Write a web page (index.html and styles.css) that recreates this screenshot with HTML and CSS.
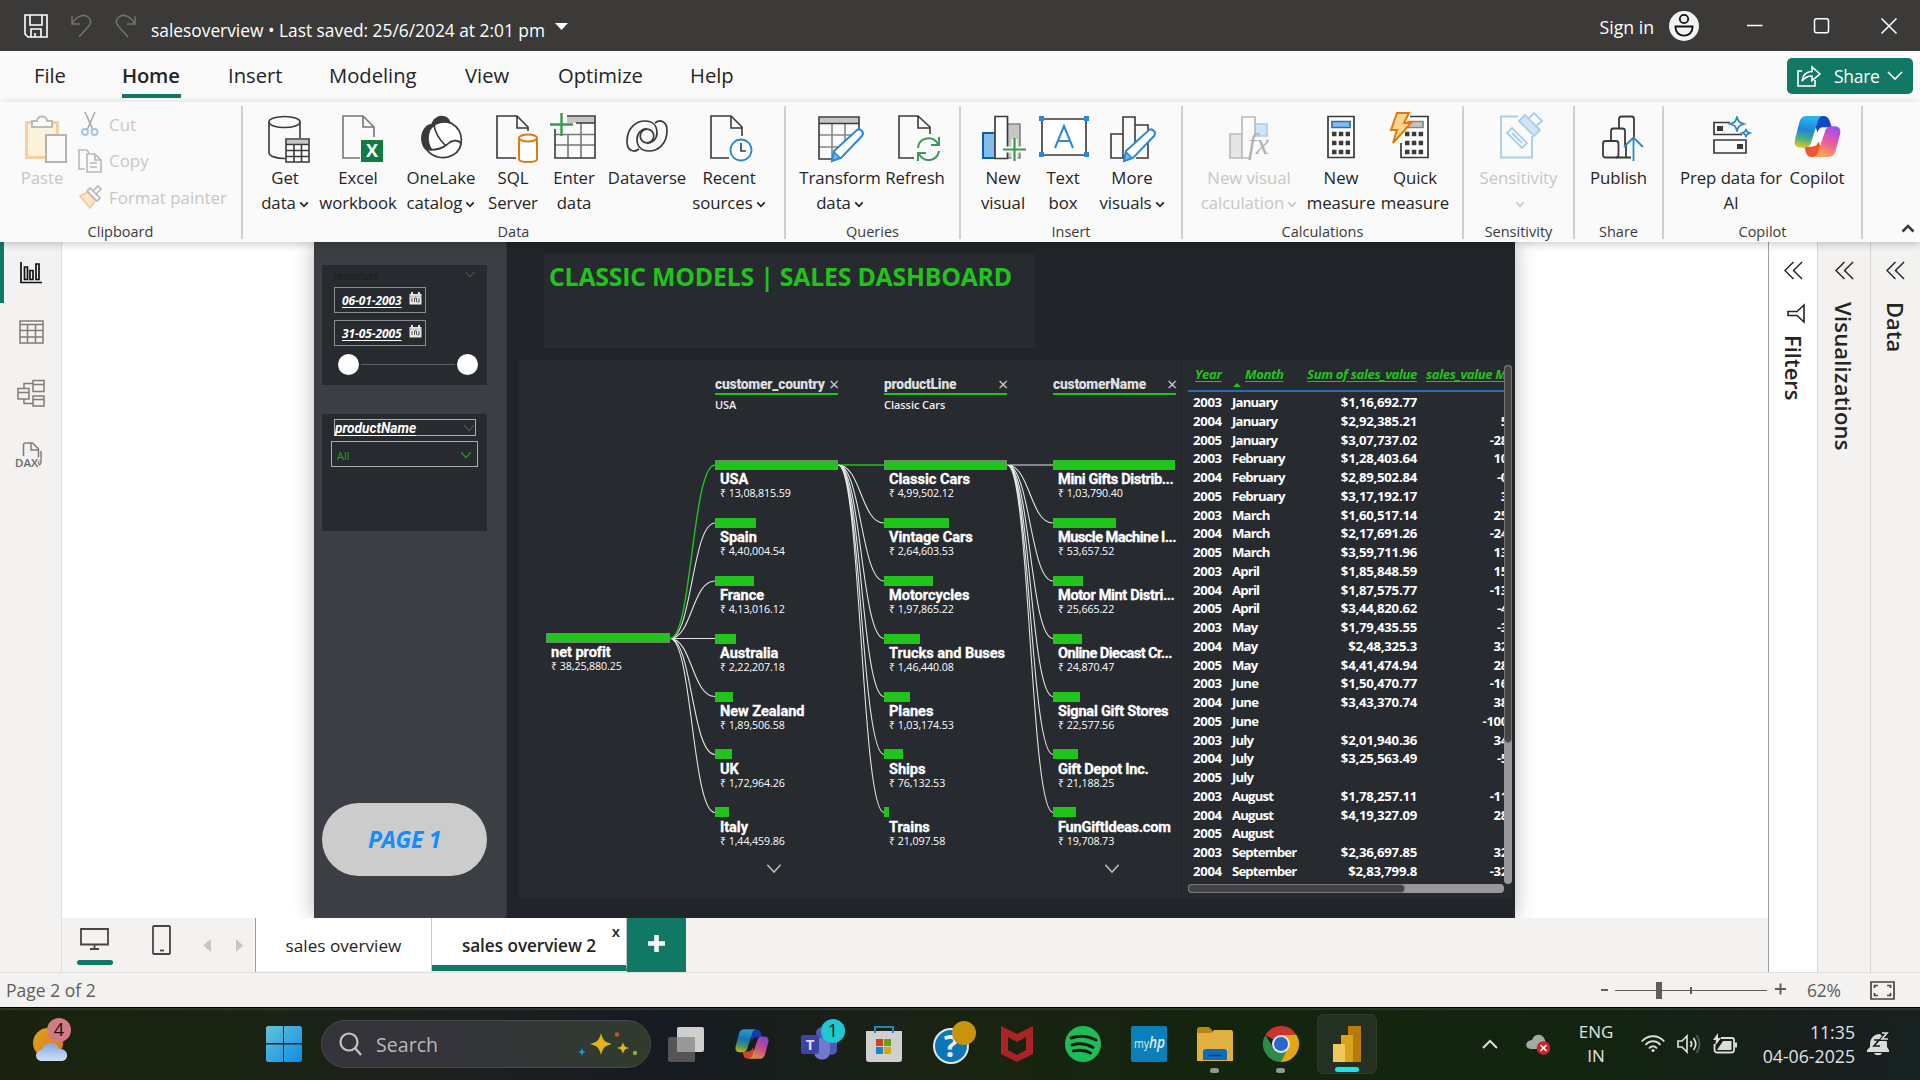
FILE: index.html
```html
<!DOCTYPE html>
<html lang="en">
<head>
<meta charset="utf-8">
<title>salesoverview</title>
<link rel="stylesheet" href="styles.css">
</head>
<body>
<svg class="defs" width="0" height="0">
  <defs>
    <symbol id="chev" viewBox="0 0 10 7"><path d="M1.3 1.3 5 5.3 8.7 1.3" fill="none" stroke="currentColor" stroke-width="1.700"/></symbol>
    <symbol id="dbl" viewBox="0 0 20 20"><path d="M10 1 1 10l9 9M19 1l-9 9 9 9" fill="none" stroke="#252423" stroke-width="1.5"/></symbol>
    <symbol id="thin" viewBox="0 0 12 8"><path d="M1 1.2 6 6.6 11 1.2" fill="none" stroke="currentColor" stroke-width="1.2"/></symbol>
    <symbol id="cal" viewBox="0 0 13 13"><path d="M.5 2h12v10.500H.5z" fill="#e8e8e8"/><path d="M3 0v3M10 0v3" stroke="#e8e8e8" stroke-width="2"/><path d="M1 4.200h11" stroke="#888" stroke-dasharray="1.500 1"/><path d="M3 6v4M5.500 6v4M5.500 6h2v4M10 6v4H8.500" stroke="#555" fill="none"/></symbol>
    <symbol id="copilot" viewBox="0 0 46 42">
      <linearGradient id="ca" x1=".3" y1="0" x2=".1" y2="1"><stop offset="0" stop-color="#2bb3ee"/><stop offset=".4" stop-color="#1c86d9"/><stop offset=".7" stop-color="#4fb07a"/><stop offset="1" stop-color="#f4cf12"/></linearGradient>
      <linearGradient id="cb" x1=".7" y1="0" x2=".3" y2="1"><stop offset="0" stop-color="#a04df0"/><stop offset=".5" stop-color="#ec5b9c"/><stop offset="1" stop-color="#ffae4a"/></linearGradient>
      <path d="M22 1h7c4 0 5.500 3 7 8l1 3h-8c-4 0-5 2-6 5l-2-6z" fill="#1546c4"/>
      <path d="M24 41h-7c-4 0-5-3-6-7l-1-3h7c4 0 6-2 7-5l2 5z" fill="#f0562e"/>
      <path d="M12 1h17c-4 0-5 3-6 6l-6 19c-1 4-3 6-7 6H6c-5 0-6-4-5-8L5 8c1-4 3-7 7-7z" fill="url(#ca)"/>
      <path d="M34 41H18c4 0 5-3 6-6l6-18c1-4 3-6 7-6h3c5 0 6 4 5 8l-4 15c-1 4-3 7-7 7z" fill="url(#cb)"/>
    </symbol>
  </defs>
</svg>

<header class="titlebar">
  <svg class="ic-save" width="24" height="24" viewBox="0 0 24 24" fill="none" stroke="#fff" stroke-width="1.600"><path d="M1 1h22v22H4l-3-3zM6 1v10h12V1M7 23v-8h10v8M11 19v4"/></svg>
  <svg class="ic-undo" width="21" height="24" viewBox="0 0 21 24" fill="none" stroke="#737270" stroke-width="1.500"><path d="M1 2v8h8M1 10C5 3 12-1 17 3s2 8-1 11L8 23"/></svg>
  <svg class="ic-redo" width="21" height="24" viewBox="0 0 21 24" fill="none" stroke="#737270" stroke-width="1.500"><path d="M20 2v8h-8M20 10C16 3 9-1 4 3s-2 8 1 11l8 9"/></svg>
  <span class="doc-title">salesoverview • Last saved: 25/6/2024 at 2:01 pm</span>
  <svg class="ic-caret" width="13" height="7" viewBox="0 0 13 7"><path d="M0 0h13L6.500 7z" fill="#fff"/></svg>
  <span class="spacer"></span>
  <span class="signin">Sign in</span>
  <svg class="ic-user" width="30" height="30" viewBox="0 0 30 30"><circle cx="15" cy="15" r="15" fill="#f3f2f1"/><g fill="none" stroke="#111" stroke-width="1.800"><circle cx="15" cy="8" r="4.200"/><path d="M6.500 15.500h17v1c0 5-4 8.200-8.500 8.200s-8.500-3.200-8.500-8.200z"/></g></svg>
  <svg class="ic-win" width="150" height="18" viewBox="0 0 150 18" fill="none" stroke="#fff" stroke-width="1.500"><path d="M0 8.500h15.500M134.500 1.500l15 15M149.500 1.500l-15 15"/><rect x="67.500" y="1.700" width="14" height="14" rx="2"/></svg>
</header>

<nav class="tabs">
  <a class="t-file">File</a><a class="t-home">Home</a><a class="t-insert">Insert</a><a class="t-model">Modeling</a><a class="t-view">View</a><a class="t-opt">Optimize</a><a>Help</a>
  <span class="spacer"></span>
  <button class="share">
    <svg width="24" height="22" viewBox="0 0 24 22" fill="none" stroke="#fff" stroke-width="1.600"><path d="M5 6H1v15h17v-6"/><path d="M5 16C6 9 10 6.500 15 6.500V2l8 7-8 6.500V11c-4 0-7 1-10 5z"/></svg>
    <span>Share</span>
    <svg width="16" height="10" viewBox="0 0 16 10"><path d="M1 1l7 7 7-7" fill="none" stroke="#fff" stroke-width="1.600"/></svg>
  </button>
</nav>

<section class="ribbon">
  <div class="group g-clip">
    <div class="items off">
      <div class="tool w-paste"><svg width="42" height="48" viewBox="0 0 42 48"><path d="M1.500 7.500h31v35h-31z" fill="#fdf3da" stroke="#f2cfa5" stroke-width="3"/><path d="M7 12V6h5c0-6 10-6 10 0h5v6z" fill="#fafafa" stroke="#bdbbb9" stroke-width="2"/><path d="M21 20h20v27H21z" fill="#fafafa" stroke="#b5b3b1" stroke-width="2"/></svg><span>Paste</span></div>
      <div class="clip-list">
        <div><svg width="18" height="24" viewBox="0 0 18 24" fill="none"><path d="M4 0l8 18M14 0 6 18" stroke="#a9a7a5" stroke-width="1.500"/><circle cx="4" cy="20" r="3" stroke="#9cc6e4" stroke-width="1.800"/><circle cx="13.500" cy="20" r="3" stroke="#9cc6e4" stroke-width="1.800"/></svg><span>Cut</span></div>
        <div><svg width="24" height="24" viewBox="0 0 24 24" fill="none" stroke="#bab8b6" stroke-width="1.600"><path d="M7 20H1V1h8l2 3M9 5h8l6 6v12H9zM17 5v6h6M12 14h7M12 18h7"/></svg><span>Copy</span></div>
        <div><svg width="24" height="24" viewBox="0 0 24 24" fill="none" stroke="#bab8b6" stroke-width="1.600"><path d="M2 11l8-4 7 9-5 7z" fill="#fbe6c8" stroke="#eec9a0"/><path d="M9 6l3-3 10 10-3 3zM15 6l5-5 3 3-5 5"/></svg><span>Format painter</span></div>
      </div>
    </div>
    <div class="glabel">Clipboard</div>
  </div>
  <div class="group g-data">
    <div class="items">
      <div class="tool w70"><svg class="nudge" width="42" height="48" viewBox="0 0 42 48" fill="none" stroke="#3b3a39" stroke-width="1.600"><ellipse cx="16.500" cy="7" rx="15.500" ry="5.500"/><path d="M1 7v31c0 3 7 5.500 16 5.500M32 7v16"/><path d="M18 24h23v23H18z" fill="#fff"/><path d="M19 25h21v4H19z" fill="#c8c6c4" stroke="none"/><path d="M18 29.500h23M18 35.500h23M18 41.500h23M26 29.500V47M33.500 29.500V47"/></svg><span>Get<br>data<i class="cv"><svg width="10" height="7"><use href="#chev"/></svg></i></span></div>
      <div class="tool w76"><svg class="nudge4" width="42" height="48" viewBox="0 0 42 48" fill="none" stroke="#777" stroke-width="1.600"><path d="M33 22V12L22 1H2v42h17"/><path d="M22 1v11h11"/><path d="M20 25h22v22H20z" fill="#107c41" stroke="none"/><text x="31" y="42" text-anchor="middle" class="xl">X</text></svg><span>Excel<br>workbook</span></div>
      <div class="tool w90"><svg width="42" height="44" viewBox="0 0 42 44" fill="none" stroke="#3b3a39" stroke-width="1.700"><path d="M14 8.500C19 5.500 26 5.500 31 8c14 8 13 26 2 32-9 5-20 3-27-6" fill="#fff"/><path d="M10 15C11 3 19 0 23 1c4 0 7 3 8 8-8-3-15-1-21 6z" fill="#3b3a39" stroke="none"/><path d="M10 9C1 12-2 26 5 34.500l7-.5C7 26 8 17 14 9.500z" fill="#3b3a39" stroke="none"/><path d="M14 10c1 7 5 14 11 20M6 34.500c8 1 15 0 21-5 4-4 11-6 14-1"/></svg><span>OneLake<br>catalog<i class="cv"><svg width="10" height="7"><use href="#chev"/></svg></i></span></div>
      <div class="tool w54"><svg class="nudge4" width="42" height="48" viewBox="0 0 42 48" fill="none" stroke="#3b3a39" stroke-width="1.600"><path d="M32 16v-4L21 1H1v42h19M21 1v12h11"/><g stroke="#e07a10" stroke-width="2"><path d="M23 23v21c0 4 18 4 18 0V23" fill="#fff"/><ellipse cx="32" cy="23" rx="9" ry="3.500" fill="#fff"/></g></svg><span>SQL<br>Server</span></div>
      <div class="tool w68"><svg class="lift" width="46" height="48" viewBox="0 0 46 48" fill="none" stroke="#3b3a39" stroke-width="1.600"><path d="M17 3h28v6H17z" fill="#c8c6c4" stroke="none"/><path d="M5 20.500h40M5 31h40M18 20v24M31 9v35" stroke="#777"/><path d="M17 2h28v42H5V15M26 9h19"/><path d="M0 10.500h23M11.500-1v23" stroke="#3a9a4c" stroke-width="2.400"/></svg><span>Enter<br>data</span></div>
      <div class="tool w78"><svg class="dv" width="42" height="32" viewBox="0 0 42 32" fill="none" stroke="#3b3a39" stroke-width="1.700"><path d="M13 29C8 33 1 31 1 21.500 1 8 10 1 19 1s12 6 12 12-5 10.500-10 10.500M29 3c5-4 12-2 12 7.500C41 24 32 31 23 31s-12-6-12-12S16 8.500 21 8.500"/><circle cx="21" cy="16" r="6.800"/></svg><span>Dataverse</span></div>
      <div class="tool w82"><svg class="nudge" width="42" height="48" viewBox="0 0 42 48" fill="none" stroke="#3b3a39" stroke-width="1.600"><path d="M32 21v-9L21 1H1v42h18M21 1v12h11"/><circle cx="31" cy="35" r="10.500" fill="#fff" stroke="#2b88d8" stroke-width="1.800"/><path d="M31 28v8h5"/></svg><span class="recent">Recent<br>sources<i class="cv"><svg width="10" height="7"><use href="#chev"/></svg></i></span></div>
    </div>
    <div class="glabel">Data</div>
  </div>
  <div class="group g-query">
    <div class="items">
      <div class="tool w84"><svg class="nudge1" width="46" height="48" viewBox="0 0 46 48" fill="none" stroke="#3b3a39" stroke-width="1.600"><path d="M2 3h39v5H2z" fill="#c8c6c4" stroke="none"/><path d="M1 20h34M1 32h22M14 9v34M27 9v19" stroke="#888"/><path d="M41 18V2H1v42h14M1 8.500h40"/><path d="M14 46l2-10 23-21c3-2 8 2 5 6L23 43z" fill="#fff" stroke="#2b88d8" stroke-width="2"/><path d="M14 46l2-9 6 6z" fill="#6fb4ec" stroke="#2b88d8"/></svg><span>Transform<br>data<i class="cv"><svg width="10" height="7"><use href="#chev"/></svg></i></span></div>
      <div class="tool w66"><svg class="nudge" width="42" height="48" viewBox="0 0 42 48" fill="none" stroke="#3b3a39" stroke-width="1.600"><path d="M32 19v-7L20 1H1v42h15M20 1v12h12"/><g stroke="#3f9a55" stroke-width="2"><path d="M20 33c1-11 15-13 20-4M41 22v8h-8M41 36c-2 11-15 12-20 3M20 46v-8h8"/></g></svg><span>Refresh</span></div>
    </div>
    <div class="glabel">Queries</div>
  </div>
  <div class="group g-insert">
    <div class="items">
      <div class="tool w62"><svg class="nudge1" width="46" height="48" viewBox="0 0 46 48" fill="none" stroke="#3b3a39" stroke-width="1.700"><path d="M26 9h13v34H26z" fill="#c8c6c4" stroke="#888"/><path d="M2 18h13v25H2z" fill="#83bdec" stroke="#0f5fa8" stroke-width="2"/><path d="M14 1.500h12.500v42H14z" fill="#fff"/><path d="M22 34.500h23M33.500 24v23" stroke="#fafafa" stroke-width="6"/><path d="M22 34.500h23M33.500 23v23" stroke="#3a9a4c" stroke-width="2.200"/></svg><span>New<br>visual</span></div>
      <div class="tool w58"><svg class="lift1" width="50" height="46" viewBox="0 0 50 46" fill="none" stroke="#3b3a39" stroke-width="1.600"><path d="M3 5h44v36H3z" fill="#fff"/><g fill="#2b88d8" stroke="none"><path d="M0 2h5v5H0zM45 2h5v5h-5zM0 38h5v5H0zM45 38h5v5h-5z"/></g><path d="M16 34l9-22 9 22M19 27h12" stroke="#2b88d8" stroke-width="2"/></svg><span>Text<br>box</span></div>
      <div class="tool w80"><svg class="nudge1" width="46" height="48" viewBox="0 0 46 48" fill="none" stroke="#3b3a39" stroke-width="1.600"><path d="M14 43H1V19h12V2h12v26M25 10h13v6M38 27v16H26M13 19v24"/><path d="M14 46l2-10 23-21c3-2 8 2 5 6L23 43z" fill="#fff" stroke="#2b88d8" stroke-width="2"/><path d="M14 46l2-9 6 6z" fill="#6fb4ec" stroke="#2b88d8"/></svg><span>More<br>visuals<i class="cv"><svg width="10" height="7"><use href="#chev"/></svg></i></span></div>
    </div>
    <div class="glabel">Insert</div>
  </div>
  <div class="group g-calc">
    <div class="items">
      <div class="tool w118 off"><svg class="nudge1" width="42" height="48" viewBox="0 0 42 48" fill="none" stroke="#bdbbb9" stroke-width="1.700"><path d="M26 9h12v12H26z" fill="#cfe4f5" stroke="#a8cdea"/><path d="M1 19h12v24H1z" fill="#e8e6e5"/><path d="M13 2h13v41H13z" fill="#fafafa"/><path d="M20 22h23v24H20z" fill="#fafafa" stroke="none"/><text x="19" y="39" class="fx">fx</text></svg><span>New visual<br>calculation<i class="cv"><svg width="10" height="7"><use href="#chev"/></svg></i></span></div>
      <div class="tool w66"><svg width="28" height="48" viewBox="0 0 28 48" fill="none" stroke="#3b3a39" stroke-width="1.700"><path d="M1 1.500h26v41H1z" fill="#fff"/><path d="M5 6.500h18v6H5z" fill="#83bdec" stroke="#2470b3"/><path d="M5 19h18M5 28h18M5 37h18" stroke-width="4.500" stroke-dasharray="4.500 2.300"/></svg><span>New<br>measure</span></div>
      <div class="tool w82q"><svg class="quick" width="40" height="48" viewBox="0 0 40 48" fill="none" stroke="#3b3a39" stroke-width="1.700"><path d="M11 28v14.500h27V1.500H20" fill="#fff"/><path d="M18 6.500h15v6H18z" fill="#c8c6c4" stroke="#888"/><path d="M15 19h19M15 28h19M15 37h19" stroke-width="4.500" stroke-dasharray="4.500 2.300"/><path d="M7-2h12l-5 10h7L3 28l4-13H1z" fill="#fbd58b" stroke="#e07a10" stroke-width="2"/></svg><span>Quick<br>measure</span></div>
    </div>
    <div class="glabel">Calculations</div>
  </div>
  <div class="group g-sens">
    <div class="items"><div class="tool w110 off"><svg class="nudge3" width="42" height="48" viewBox="0 0 42 48" fill="none" stroke="#a8d0ea" stroke-width="1.900"><path d="M18 1.500H1v41h31V21"/><path d="M19 6l6-6 15 15-6 6z" fill="#cfe5f4"/><path d="M28 4l6-6 8 8-7 6M7 18l5-5 15 15-5 5zM12 18l10 10"/></svg><span>Sensitivity<br><i class="cv"><svg width="10" height="7"><use href="#chev"/></svg></i></span></div></div>
    <div class="glabel">Sensitivity</div>
  </div>
  <div class="group g-share">
    <div class="items"><div class="tool w88"><svg class="nudge4" width="42" height="48" viewBox="0 0 42 48" fill="none" stroke="#3b3a39" stroke-width="1.800"><path d="M17 13V4c0-1.500 1-2.500 2.500-2.500h10c1.500 0 2.500 1 2.500 2.500v18M9 25V16c0-1.500 1-2.500 2.500-2.500h9c1.500 0 2.500 1 2.500 2.500v14M14 42.500h15M24 42V28"/><rect x="1" y="26" width="15.500" height="16.500" rx="2.500"/><path d="M31.500 46V23M22 32l9.500-9.500L41 32" stroke="#2b88c8"/></svg><span>Publish</span></div></div>
    <div class="glabel">Share</div>
  </div>
  <div class="group g-cop">
    <div class="items">
      <div class="tool w102"><svg class="nudge1" width="42" height="48" viewBox="0 0 42 48" fill="none" stroke="#3b3a39" stroke-width="1.700"><path d="M19 7.500H3v12h28M3 25h32v13H3z"/><path d="M6 11h6v5H6zM26 29h6v5h-6z" fill="#3b3a39" stroke="none"/><path d="M26 1.500c1 5 2 6 7 7.500-5 1.500-6 2.500-7 7.500-1-5-2-6-7-7.500 5-1.500 6-2.500 7-7.500zM35 14c.6 2.500 1 3 4 4-3 1-3.400 1.500-4 4-.6-2.500-1-3-4-4 3-1 3.400-1.500 4-4z" stroke="#2b88c8"/></svg><span>Prep data for<br>AI</span></div>
      <div class="tool w70"><svg width="47" height="43"><use href="#copilot"/></svg><span>Copilot</span></div>
    </div>
    <div class="glabel">Copilot</div>
  </div>
  <svg class="collapse" width="14" height="9" viewBox="0 0 14 9"><path d="M1.500 7.500 7 2l5.500 5.500" fill="none" stroke="#3b3a39" stroke-width="2.600"/></svg>
</section>

<main class="work">
  <nav class="rail">
    <svg class="r1" width="22" height="22" viewBox="0 0 22 22" fill="none" stroke="#111" stroke-width="1.700"><path d="M1 0v20.500h21"/><path d="M4.500 5h3v12.500h-3zM10 8.500h3v9h-3zM16 2h3v15.500h-3z"/></svg>
    <svg class="r2" width="25" height="24" viewBox="0 0 25 24" fill="none" stroke="#807e7c" stroke-width="1.500"><path d="M1 1h23v22H1zM1 4.500h23M1 10.500h23M1 17h23M8.500 4v19M16.500 4v19"/></svg>
    <svg class="r3" width="28" height="28" viewBox="0 0 28 28" fill="none" stroke="#807e7c" stroke-width="1.500"><path d="M16 1.500h11v11H16zM16 5.500h11M1 9.500h11v10.500H1zM1 13.500h11M16 17h11v10H16zM16 20.500h11M7 9V4.500h9M7 20v4.500h9"/></svg>
    <svg class="r4" width="28" height="26" viewBox="0 0 28 26" fill="none" stroke="#807e7c" stroke-width="1.500"><path d="M7.500 14V3c0-1.200 1-2 2-2h7l6 6v13c0 2-1 3-3 3M15 1v7h7M25 9v10c0 3-2 4.500-4 4.500"/><text x="-1" y="24.500" class="dax">DAX</text></svg>
  </nav>
  <div class="center">
    <div class="stage">
      <div class="report">
        <aside class="side">
          <div class="slicer s-date">
            <div class="s-head"><span>orderdate</span><svg width="10" height="7"><use href="#thin"/></svg></div>
            <div class="date"><u>06-01-2003</u><svg width="13" height="13"><use href="#cal"/></svg></div>
            <div class="date"><u>31-05-2005</u><svg width="13" height="13"><use href="#cal"/></svg></div>
            <div class="range"><b></b><i></i><b></b></div>
          </div>
          <div class="slicer s-prod">
            <div class="p-head"><u>productName</u><svg width="12" height="8"><use href="#thin"/></svg></div>
            <div class="p-all"><span>All</span><svg width="12" height="8"><use href="#thin"/></svg></div>
          </div>
          <button class="page1">PAGE 1</button>
        </aside>
        <div class="board">
          <h1>CLASSIC MODELS | SALES DASHBOARD</h1>
          <div class="visuals">
            <div class="tree">
              <svg class="links" width="662" height="538" viewBox="519 360 662 538" fill="none" stroke="#e4e4e4" stroke-width="1.100">
                <path d="M670 638.500C692 638.500 692 523 715 523M670 638.500C692 638.500 692 581 715 581M670 638.500H715M670 638.500C692 638.500 692 696.500 715 696.500M670 638.500C692 638.500 692 754.500 715 754.500M670 638.500C692 638.500 692 812.500 715 812.500"/>
                <path d="M670 638.500C692 638.500 692 465 715 465" stroke="#20c41a" stroke-width="1.400"/>
                <path d="M838 465H884" stroke="#20c41a" stroke-width="1.500"/>
                <path d="M838 465C861 465 861 523 884 523M838 465C861 465 861 581 884 581M838 465C861 465 861 638.500 884 638.500M838 465C861 465 861 696.500 884 696.500M838 465C861 465 861 754.500 884 754.500M838 465C861 465 861 812.500 884 812.500"/>
                <path d="M1007 465H1053M1007 465C1030 465 1030 523 1053 523M1007 465C1030 465 1030 581 1053 581M1007 465C1030 465 1030 638.500 1053 638.500M1007 465C1030 465 1030 696.500 1053 696.500M1007 465C1030 465 1030 754.500 1053 754.500M1007 465C1030 465 1030 812.500 1053 812.500"/>
              </svg>
              <div class="col root"><div class="node"><s class="sel" style="width:124px"></s><b>net profit</b><span>₹ 38,25,880.25</span></div></div>
              <div class="col">
                <div class="c-head"><b>customer_country</b><em>×</em></div><div class="c-sub">USA</div>
                <div class="node"><s class="sel" style="width:123px"></s><b>USA</b><span>₹ 13,08,815.59</span></div>
                <div class="node"><s style="width:41px"></s><b>Spain</b><span>₹ 4,40,004.54</span></div>
                <div class="node"><s style="width:39px"></s><b>France</b><span>₹ 4,13,016.12</span></div>
                <div class="node"><s style="width:21px"></s><b>Australia</b><span>₹ 2,22,207.18</span></div>
                <div class="node"><s style="width:18px"></s><b>New Zealand</b><span>₹ 1,89,506.58</span></div>
                <div class="node"><s style="width:17px"></s><b>UK</b><span>₹ 1,72,964.26</span></div>
                <div class="node"><s style="width:14px"></s><b>Italy</b><span>₹ 1,44,459.86</span></div>
                <svg class="more" width="16" height="11"><use href="#thin"/></svg>
              </div>
              <div class="col">
                <div class="c-head"><b>productLine</b><em>×</em></div><div class="c-sub">Classic Cars</div>
                <div class="node"><s class="sel" style="width:123px"></s><b>Classic Cars</b><span>₹ 4,99,502.12</span></div>
                <div class="node"><s style="width:65px"></s><b>Vintage Cars</b><span>₹ 2,64,603.53</span></div>
                <div class="node"><s style="width:49px"></s><b>Motorcycles</b><span>₹ 1,97,865.22</span></div>
                <div class="node"><s style="width:36px"></s><b>Trucks and Buses</b><span>₹ 1,46,440.08</span></div>
                <div class="node"><s style="width:26px"></s><b>Planes</b><span>₹ 1,03,174.53</span></div>
                <div class="node"><s style="width:19px"></s><b>Ships</b><span>₹ 76,132.53</span></div>
                <div class="node"><s style="width:5px"></s><b>Trains</b><span>₹ 21,097.58</span></div>
              </div>
              <div class="col third">
                <div class="c-head"><b>customerName</b><em>×</em></div><div class="c-sub">&nbsp;</div>
                <div class="node"><s style="width:122px"></s><b>Mini Gifts Distrib...</b><span>₹ 1,03,790.40</span></div>
                <div class="node"><s style="width:63px"></s><b class="tight">Muscle Machine I...</b><span>₹ 53,657.52</span></div>
                <div class="node"><s style="width:30px"></s><b>Motor Mint Distri...</b><span>₹ 25,665.22</span></div>
                <div class="node"><s style="width:29px"></s><b class="tight">Online Diecast Cr...</b><span>₹ 24,870.47</span></div>
                <div class="node"><s style="width:27px"></s><b class="loose">Signal Gift Stores</b><span>₹ 22,577.56</span></div>
                <div class="node"><s style="width:25px"></s><b class="loose">Gift Depot Inc.</b><span>₹ 21,188.25</span></div>
                <div class="node"><s style="width:23px"></s><b class="loose">FunGiftIdeas.com</b><span>₹ 19,708.73</span></div>
                <svg class="more" width="16" height="11"><use href="#thin"/></svg>
              </div>
            </div>
            <div class="grid">
              <div class="g-top">
                <div class="g-body">
                  <div class="row head"><span><u>Year</u></span><span><u>Month</u></span><span><u>Sum of sales_value</u></span><span><u>sales_value M</u></span></div>
                  <div class="rows">
                  <div class="row"><span>2003</span><span>January</span><span>$1,16,692.77</span><span></span></div>
                  <div class="row"><span>2004</span><span>January</span><span>$2,92,385.21</span><span>5</span></div>
                  <div class="row"><span>2005</span><span>January</span><span>$3,07,737.02</span><span>-28</span></div>
                  <div class="row"><span>2003</span><span>February</span><span>$1,28,403.64</span><span>10</span></div>
                  <div class="row"><span>2004</span><span>February</span><span>$2,89,502.84</span><span>-0</span></div>
                  <div class="row"><span>2005</span><span>February</span><span>$3,17,192.17</span><span>3</span></div>
                  <div class="row"><span>2003</span><span>March</span><span>$1,60,517.14</span><span>25</span></div>
                  <div class="row"><span>2004</span><span>March</span><span>$2,17,691.26</span><span>-24</span></div>
                  <div class="row"><span>2005</span><span>March</span><span>$3,59,711.96</span><span>13</span></div>
                  <div class="row"><span>2003</span><span>April</span><span>$1,85,848.59</span><span>15</span></div>
                  <div class="row"><span>2004</span><span>April</span><span>$1,87,575.77</span><span>-13</span></div>
                  <div class="row"><span>2005</span><span>April</span><span>$3,44,820.62</span><span>-4</span></div>
                  <div class="row"><span>2003</span><span>May</span><span>$1,79,435.55</span><span>-3</span></div>
                  <div class="row"><span>2004</span><span>May</span><span>$2,48,325.3</span><span>32</span></div>
                  <div class="row"><span>2005</span><span>May</span><span>$4,41,474.94</span><span>28</span></div>
                  <div class="row"><span>2003</span><span>June</span><span>$1,50,470.77</span><span>-16</span></div>
                  <div class="row"><span>2004</span><span>June</span><span>$3,43,370.74</span><span>38</span></div>
                  <div class="row"><span>2005</span><span>June</span><span></span><span>-100</span></div>
                  <div class="row"><span>2003</span><span>July</span><span>$2,01,940.36</span><span>34</span></div>
                  <div class="row"><span>2004</span><span>July</span><span>$3,25,563.49</span><span>-5</span></div>
                  <div class="row"><span>2005</span><span>July</span><span></span><span></span></div>
                  <div class="row"><span>2003</span><span>August</span><span>$1,78,257.11</span><span>-11</span></div>
                  <div class="row"><span>2004</span><span>August</span><span>$4,19,327.09</span><span>28</span></div>
                  <div class="row"><span>2005</span><span>August</span><span></span><span></span></div>
                  <div class="row"><span>2003</span><span>September</span><span>$2,36,697.85</span><span>32</span></div>
                  <div class="row"><span>2004</span><span>September</span><span>$2,83,799.8</span><span>-32</span></div>
                  </div>
                </div>
                <div class="vbar"><i></i></div>
              </div>
              <div class="hbar"><i></i></div>
            </div>
          </div>
        </div>
      </div>
    </div>
    <div class="pagetabs">
      <div class="views">
        <div class="desk"><svg width="29" height="22" viewBox="0 0 29 22" fill="none" stroke="#484644" stroke-width="1.800"><path d="M1 1h27v15.500H1zM14.500 17v4M10 21h9"/></svg><i></i></div>
        <svg class="phone" width="19" height="30" viewBox="0 0 19 30" fill="none" stroke="#484644" stroke-width="1.800"><rect x="1" y="1" width="17" height="28" rx="1"/><path d="M8 25.500h4"/></svg>
        <svg class="arrows" width="41" height="13" viewBox="0 0 41 13" fill="#c8c6c4"><path d="M8 0v13L0 6.500zM33 0v13l7-6.500z"/></svg>
      </div>
      <div class="tab">sales overview</div>
      <div class="tab on">sales overview 2<span class="x">x</span></div>
      <div class="plus"><svg width="17" height="17" viewBox="0 0 17 17"><path d="M8.500 0v17M0 8.500h17" stroke="#fff" stroke-width="4.500"/></svg></div>
    </div>
  </div>
  <aside class="pane p-filters"><svg width="19" height="19"><use href="#dbl"/></svg><svg class="funnel" width="18" height="19" viewBox="0 0 18 19"><path d="M17 1v17l-7-6.500H1v-4h9z" fill="none" stroke="#252423" stroke-width="1.600"/></svg><span>Filters</span></aside>
  <aside class="pane p-vis"><svg width="19" height="19"><use href="#dbl"/></svg><span>Visualizations</span></aside>
  <aside class="pane p-dat"><svg width="19" height="19"><use href="#dbl"/></svg><span>Data</span></aside>
</main>

<footer class="status">
  <span class="pg">Page 2 of 2</span>
  <span class="spacer"></span>
  <svg width="186" height="18" viewBox="0 0 186 18" fill="none" stroke="#605e5c"><path d="M1 9h7M175 8h11M180.500 2.500v11" stroke-width="2"/><path d="M15 9.500h152"/><path d="M59 1v17" stroke-width="6"/><path d="M91 6v7" stroke-width="2"/></svg>
  <span class="pct">62%</span>
  <svg width="25" height="19" viewBox="0 0 25 19" fill="none" stroke="#484644" stroke-width="1.700"><path d="M1 1h23v17H1zM4.500 7V4.500H8M17 4.500h3.500V7M20.500 12v2.500H17M8 14.500H4.500V12"/></svg>
</footer>

<footer class="taskbar">
  <div class="weather"><svg width="36" height="46" viewBox="0 0 36 46"><defs><linearGradient id="sun" x1="0" y1="0" x2="1" y2="1"><stop offset="0" stop-color="#d9a520"/><stop offset="1" stop-color="#e0731c"/></linearGradient><linearGradient id="cl" x1="0" y1="0" x2="0" y2="1"><stop offset="0" stop-color="#7fa6dd"/><stop offset="1" stop-color="#d3e0f5"/></linearGradient></defs><circle cx="15" cy="26" r="15" fill="url(#sun)"/><path d="M9 44c-8 0-8-11 0-11 1-8 15-10 17-1 10-1 11 12 2 12z" fill="url(#cl)"/><circle cx="26" cy="13" r="12" fill="#d17b84"/><text x="26" y="19" text-anchor="middle" class="badge">4</text></svg></div>
  <svg class="win" width="36" height="36" viewBox="0 0 36 36"><defs><linearGradient id="wg" x1="0" y1="0" x2="1" y2="1"><stop offset="0" stop-color="#62c5d8"/><stop offset="1" stop-color="#0c8ae6"/></linearGradient></defs><path d="M1.500 0h15.500v17H0V1.500zM18 0h16.500L36 1.500V17H18zM0 18.500h17V36H1.500L0 34.500zM18 18.500h18v16L34.500 36H18z" fill="url(#wg)"/></svg>
  <div class="search">
    <svg width="23" height="24" viewBox="0 0 23 24" fill="none" stroke="#c4c6c4" stroke-width="2.200"><circle cx="10" cy="10" r="8.500"/><path d="M16 16l6 7"/></svg><span>Search</span>
    <svg class="spark" width="60" height="26" viewBox="0 0 60 26"><path d="M23 2c2 8 4 9 11 11-7 2-9 3-11 11-2-8-4-9-11-11 7-2 9-3 11-11z" fill="#e3b21d"/><path d="M45 11c1 4 2 5 6 6-4 1-5 2-6 6-1-4-2-5-6-6 4-1 5-2 6-6z" fill="#e3b21d"/><path d="M4 17c1 3 1 3 4 4-3 1-3 1-4 4-1-3-1-3-4-4 3-1 3-1 4-4z" fill="#1597d8"/><circle cx="39" cy="3.500" r="2.200" fill="#c5562a"/><circle cx="57" cy="22" r="2.200" fill="#7fae3a"/></svg>
  </div>
  <div class="apps">
    <div><svg width="36" height="36" viewBox="0 0 36 36"><rect x="9" y="1" width="27" height="25" rx="2" fill="#cfcfcf"/><rect y="11" width="27" height="25" rx="2" fill="#606060" fill-opacity=".85"/><path d="M9 11h18v15H9z" fill="#999"/></svg></div>
    <div class="dim"><svg width="34" height="34"><use href="#copilot"/></svg></div>
    <div><svg class="teams" width="46" height="38" viewBox="0 0 46 38"><g fill="#5059b8"><circle cx="21" cy="8" r="6"/><path d="M27 13h9v12c0 4-5 6-9 4z"/><path d="M13 13h16v14c0 10-16 10-16 0z" fill="#7378cf"/><rect y="10" width="18" height="19" rx="2" fill="#3c45a5"/></g><text x="9" y="25" text-anchor="middle" class="tt">T</text><circle cx="32" cy="6" r="12" fill="#1ec8d2"/><text x="32" y="12" text-anchor="middle" class="badge">1</text></svg></div>
    <div><svg width="36" height="36" viewBox="0 0 36 36"><path d="M0 5h36v28c0 2-1 3-3 3H3c-2 0-3-1-3-3z" fill="#cfd0cf"/><path d="M9 7V1h18v6" fill="none" stroke="#1a87c0" stroke-width="2"/><path d="M10 13h7v7h-7z" fill="#cf3f22"/><path d="M18 13h7v7h-7z" fill="#6c9c12"/><path d="M10 21h7v7h-7z" fill="#1287c9"/><path d="M18 21h7v7h-7z" fill="#dda30c"/></svg></div>
    <div><svg class="help" width="44" height="44" viewBox="0 0 44 44"><circle cx="18" cy="24" r="17" fill="#0a78b8" stroke="#e6e6e6" stroke-width="2"/><text x="18" y="35" text-anchor="middle" class="qm">?</text><circle cx="31" cy="11" r="12" fill="#c8940c"/></svg></div>
    <div><svg width="32" height="36" viewBox="0 0 32 36"><path d="M0 0l16 8 16-8v28l-16 8-16-8zM7 11v13l9 5 9-5V11l-9 5z" fill="#a92425" fill-rule="evenodd"/></svg></div>
    <div><svg width="36" height="36" viewBox="0 0 36 36"><circle cx="18" cy="18" r="18" fill="#1fbd57"/><path d="M6 12c8-3 18-2 25 2M7 19c7-2 15-1 21 2.500M8.500 25c6-1.500 12-1 17 2" fill="none" stroke="#0e1a10" stroke-width="3" stroke-linecap="round"/></svg></div>
    <div><svg width="36" height="36" viewBox="0 0 36 36"><rect width="36" height="36" rx="2" fill="#0b80b8"/><text x="3" y="22" class="my" textLength="15" lengthAdjust="spacingAndGlyphs">my</text><text x="18" y="22" class="my hp" textLength="16" lengthAdjust="spacingAndGlyphs">hp</text></svg></div>
    <div class="dot"><svg width="36" height="34" viewBox="0 0 36 34"><path d="M0 2c0-1 1-2 2-2h10l3 3v6H0z" fill="#b8860b"/><path d="M0 6h14l3-3h17c1 0 2 1 2 2v29H0z" fill="#e0b040"/><path d="M6 33V25c0-2 1-3 3-3h18c2 0 3 1 3 3v8z" fill="#0f6cbd"/><path d="M11 28.500h14" stroke="#0a3f78" stroke-width="1.500"/></svg></div>
    <div class="dot"><svg width="36" height="36" viewBox="0 0 36 36"><path d="M18 18 2.400 9A18 18 0 0 1 33.600 9z" fill="#c8372d"/><path d="M18 18V9h15.600A18 18 0 0 1 18 36z" fill="#e0a90f"/><path d="M18 18l6 6-6 12A18 18 0 0 1 2.400 9l8 13z" fill="#2e8b4a"/><circle cx="18" cy="18" r="9" fill="#e8e8e8"/><circle cx="18" cy="18" r="7" fill="#2b66cf"/></svg></div>
    <div class="active"><svg width="28" height="36" viewBox="0 0 28 36"><path d="M15 0h13v36H15z" fill="#b87a08"/><path d="M8 9h12v27H8z" fill="#d9a21b"/><path d="M0 18h12v18H0z" fill="#ecc95a"/></svg></div>
  </div>
  <span class="spacer"></span>
  <div class="tray">
    <svg class="t1" width="16" height="10" viewBox="0 0 16 10"><path d="M1 9l7-7 7 7" fill="none" stroke="#ddd" stroke-width="2"/></svg>
    <svg class="t2" width="25" height="21" viewBox="0 0 25 21"><path d="M5 15c-7 0-6-9 1-9C8-1 17-1 19 6l2 9z" fill="#a5a8a5"/><circle cx="17.500" cy="14" r="6.800" fill="#c9252b"/><path d="M14.500 11l6 6M20.500 11l-6 6" stroke="#fff" stroke-width="1.600"/></svg>
    <div class="lang">ENG<br>IN</div>
    <svg class="t3" width="24" height="18" viewBox="0 0 24 18" fill="none" stroke="#dcdcdc" stroke-width="1.800"><path d="M.7 6.500c6-7 16.600-7 22.600 0M4.500 10c4-5 11-5 15 0M8 13.500c2-3 6-3 8 0"/><circle cx="12" cy="15.500" r="1.600" fill="#dcdcdc" stroke="none"/></svg>
    <svg class="t4" width="24" height="20" viewBox="0 0 24 20" fill="none" stroke="#dcdcdc" stroke-width="1.700"><path d="M1 7h4l5-5v16l-5-5H1zM13.500 7c1.500 2 1.500 4 0 6M16.500 4c3 4 3 8 0 12"/><path d="M19.500 1c4 6 4 12 0 18" stroke="#565b56"/></svg>
    <svg class="t5" width="24" height="20" viewBox="0 0 24 20"><path d="M8 4h11c1.500 0 2 1 2 2v10c0 1.500-1 2.500-2.500 2.500H4C2.500 18.500 1.500 17.500 1.500 16V10" fill="none" stroke="#dcdcdc" stroke-width="1.800"/><path d="M4 16l6-9h8.500v9zM22 8.500h2v5h-2zM5-1 0 6h3l-1 6 6-8H5z" fill="#dcdcdc"/></svg>
    <div class="clock">11:35<br>04-06-2025</div>
    <svg class="t6" width="23" height="24" viewBox="0 0 23 24"><path d="M3 13c0-7 4-11 10-11l7 8v5l2 3v2H0v-2l3-3zM7 21h8c-1 3-7 3-8 0z" fill="#dcdcdc"/><path d="M7 8h5l-5 6h6" fill="none" stroke="#182018" stroke-width="1.700"/><path d="M15 1h5l-5 6h6" fill="none" stroke="#182018" stroke-width="4"/><path d="M15 1h5l-5 6h6" fill="none" stroke="#dcdcdc" stroke-width="1.700"/></svg>
  </div>
</footer>
</body>
</html>
```

FILE: styles.css
```css
* { box-sizing: border-box; }
body { margin: 0; width: 1920px; height: 1080px; overflow: hidden; display: flex; flex-direction: column; font-family: "Open Sans", "Noto Sans", sans-serif; color: #252423; background: #fff; }
svg { display: block; flex: none; overflow: visible; }
.defs { position: absolute; }
.spacer { flex: 1; }
button { border: 0; padding: 0; font: inherit; }
u { text-decoration-thickness: 1px; text-underline-offset: 2px; }

/* title bar */
.titlebar { height: 51px; flex: none; background: #3b3a38; color: #fff; display: flex; align-items: center; padding-left: 24px; padding-right: 23px; white-space: nowrap; }
.ic-undo { margin-left: 23px; }
.ic-redo { margin-left: 23px; }
.doc-title { margin-left: 15px; margin-top: 9px; width: 395px; font-size: 17.350px; }
.ic-caret { margin-left: 9px; margin-top: 2px; }
.signin { font-size: 17.700px; margin-right: 15px; margin-top: 2px; }
.ic-user { margin-right: 48px; }

/* tabs */
.tabs { height: 51px; flex: none; background: #fafafa; display: flex; align-items: flex-start; padding: 7px 7px 0 34px; font-size: 20.2px; }
.tabs a { line-height: 35px; height: 40px; flex: none; white-space: nowrap; }
.t-file { width: 88px; }
.tabs .t-home { width: 59px; margin-right: 47px; font-weight: 600; border-bottom: 4px solid #117865; letter-spacing: -0.2px; }
.t-insert { width: 101px; }
.t-model { width: 136px; }
.t-view { width: 93px; }
.t-opt { width: 132px; }
.share { width: 126px; height: 36px; background: #117865; border-radius: 5px; color: #fff; display: flex; align-items: center; padding-left: 10px; font-size: 17.5px; }
.share span { margin: 0 7px 0 13px; letter-spacing: -0.3px; }

/* ribbon */
.ribbon { height: 140px; flex: none; background: #fafafa; display: flex; padding-top: 4px; position: relative; z-index: 2; box-shadow: 0 2px 8px rgba(0,0,0,.22); }
.group { height: 133px; border-right: 2px solid #d2d0ce; display: flex; flex-direction: column; }
.items { height: 115px; display: flex; flex: none; }
.glabel { text-align: center; font-size: 14.5px; line-height: 22px; color: #3b3a39; }
.tool { display: flex; flex-direction: column; align-items: center; padding-top: 9px; font-size: 16.800px; line-height: 25px; text-align: center; white-space: nowrap; flex: none; letter-spacing: -0.05px; }
.tool > svg { margin-bottom: auto; }
.tool > span { height: 56px; flex: none; display: block; }
.tool .recent { margin-left: 4px; }
.tool .nudge1 { margin-left: 2px; }
.tool .nudge3 { margin-left: 4px; }
.tool .nudge { margin-left: 7px; }
.tool .nudge4 { margin-left: 8px; }
.tool .quick { margin-left: -11px; }
.tool .lift { margin-top: -1px; margin-left: -2px; }
.tool .lift1 { margin-top: -1px; margin-left: 2px; }
.tool .dv { margin-top: 5px; margin-left: -1px; }
.cv { display: inline-block; margin-left: 3px; }
.cv svg { display: inline-block; vertical-align: 1px; }
.off, .off .tool { color: #c8c6c4; }
.g-clip { width: 243px; }
.g-data { width: 543px; }
.g-query { width: 175px; }
.g-insert { width: 222px; }
.g-calc { width: 281px; }
.g-sens { width: 111px; }
.g-share { width: 89px; }
.g-cop { width: 199px; }
.g-data .items, .g-calc .items { padding-left: 7px; }
.g-query .items { padding-left: 12px; }
.g-insert .items { padding-left: 11px; }
.g-cop .items { padding-left: 16px; }
.w-paste { width: 84px; }
.w-paste svg { margin-left: 7px; }
.w54 { width: 54px; } .w58 { width: 58px; } .w62 { width: 62px; } .w66 { width: 66px; } .w68 { width: 68px; } .w70 { width: 70px; }
.w76 { width: 76px; } .w78 { width: 78px; } .w80 { width: 80px; } .w82, .w82q { width: 82px; } .w84 { width: 84px; } .w88 { width: 87px; }
.w90 { width: 90px; } .w102 { width: 102px; } .w110 { width: 109px; } .w118 { width: 118px; }
.clip-list { font-size: 16.900px; }
.clip-list div { display: flex; align-items: center; height: 36.500px; margin-left: -6px; }
.clip-list svg { width: 24px; }
.clip-list span { margin-left: 7px; white-space: nowrap; }
.collapse { margin: 118px 0 0 38px; }
.xl { font: 700 18px "Open Sans", sans-serif; fill: #fff; stroke: none; }
.fx { font: italic 29px "Liberation Serif", serif; fill: #b3b1af; stroke: none; }

/* workspace */
.work { height: 730px; flex: none; display: flex; }
.rail { width: 62px; background: #f3f2f1; border-right: 1px solid #e1dfdd; display: flex; flex-direction: column; align-items: flex-start; background-image: linear-gradient(#117865, #117865); background-size: 4px 61px; background-repeat: no-repeat; }
.r1 { margin: 20px 0 0 20px; }
.r2 { margin: 36px 0 0 19px; }
.r3 { margin: 35px 0 0 17px; }
.r4 { margin: 35px 0 0 16px; }
.dax { font: 600 11.500px "Open Sans", sans-serif; fill: #6b6967; stroke: #f3f2f1; stroke-width: 3px; paint-order: stroke; }
.center { width: 1706px; display: flex; flex-direction: column; }
.stage { height: 676px; padding-left: 252px; overflow: hidden; background: #fff; }
.report { width: 1201px; height: 676px; display: flex; background: #212429; box-shadow: 0 0 20px rgba(0,0,0,.28); color: #fff; }
.side { width: 193px; background: #3b3f43; display: flex; flex-direction: column; padding-left: 8px; border-right: 1px solid #2e3236; }
.slicer { width: 165px; background: #272a2f; }
.s-date { height: 120px; margin-top: 23px; padding-left: 12px; }
.s-head { display: flex; align-items: center; justify-content: space-between; height: 22px; padding-right: 12px; color: #1c1e20; }
.s-head svg { color: #666; margin-top: -3px; }
.s-head span { font: 10px Roboto, sans-serif; letter-spacing: .1px; }
.date { width: 92px; height: 26px; margin-bottom: 7px; border: 1.500px solid #8b8d90; display: flex; align-items: center; padding-left: 7px; font-size: 12px; font-weight: 700; font-style: italic; letter-spacing: -0.1px; justify-content: space-between; padding-right: 3px; }
.date svg { margin-top: -4px; }
.range { display: flex; align-items: center; margin-left: 4px; width: 140px; height: 22px; }
.range b { width: 21px; height: 21px; border-radius: 50%; background: #fff; }
.range i { flex: 1; height: 1px; background: #5c5f63; margin: 0 2px; }
.s-prod { height: 117px; margin-top: 29px; padding: 5px 0 0 9px; }
.p-head { width: 142px; height: 17px; margin-left: 3px; border: 1.500px solid #a9abad; display: flex; align-items: center; justify-content: space-between; font: italic 700 13.700px/16px Roboto, sans-serif; color: #fff; }
.p-head svg { color: #555; }
.p-all { width: 147px; height: 26px; margin-top: 5px; border: 1.500px solid #a9abad; display: flex; align-items: center; justify-content: space-between; padding: 2px 5px 0 5px; font-size: 11px; color: #1fa51c; }
.page1 { width: 165px; height: 73px; margin-top: 272px; border-radius: 37px; background: #ccc; color: #118dff; font-size: 22.800px; font-style: italic; font-weight: 700; letter-spacing: -0.3px; }
.board { flex: 1; padding: 12px 2px 0 12px; }
.board h1 { margin: 0 0 12px 25px; width: 491px; height: 94px; padding: 5px 0 0 5px; background: #272a2f; color: #20c41a; font-size: 24.800px; line-height: 34px; font-weight: 700; white-space: nowrap; letter-spacing: -0.2px; }
.visuals { display: flex; gap: 1px; height: 538px; }
.tree { width: 662px; background: #272a2f; display: flex; gap: 46px; padding-left: 27px; position: relative; }
.links { position: absolute; left: 0; top: 0; }
.col { width: 123px; padding-top: 15px; white-space: nowrap; position: relative; flex: none; }
.root { padding-top: 273px; }
.c-head { height: 20px; display: flex; justify-content: space-between; align-items: center; border-bottom: 2px solid #20c41a; font: 700 13.800px/18px Roboto, sans-serif; color: #dedede; letter-spacing: -0.2px; }
.c-head em { font: 400 18px/16px "Open Sans", sans-serif; color: #ccc; margin-right: -1px; }
.c-sub { height: 65px; padding-top: 2px; font-size: 11px; line-height: 16px; font-weight: 600; color: #eee; letter-spacing: -0.05px; }
.node { height: 57.900px; }
.node s { display: block; height: 10px; background: #20c41a; }
.node .sel { outline: 1px solid #6d8a6c; outline-offset: -1px; }
.node b { display: block; margin-left: 5px; font: 700 14.600px/18px Roboto, sans-serif; letter-spacing: -0.05px; padding-top: .3px; -webkit-text-stroke: .3px #fff; }
.third .node b { letter-spacing: -0.38px; }
.third .node .tight { letter-spacing: -0.55px; }
.third .node .loose { letter-spacing: -0.25px; }
.node span { display: block; margin-left: 5px; font-size: 10.700px; line-height: 11px; letter-spacing: -0.1px; }
.more { margin: -2px 0 0 51px; color: #bbb; }
.grid { width: 330px; background: #272a2f; padding: 5px 0 0 6px; font-size: 13.200px; font-weight: 700; }
.g-top { display: flex; height: 519px; }
.g-body { width: 316px; overflow: hidden; }
.row { display: grid; grid-template-columns: 44px 78px 107px 91px; height: 18.760px; line-height: 18.760px; white-space: nowrap; letter-spacing: -0.35px; }
.row span { padding-left: 5px; }
.row span + span { padding-left: 0; }
.row span:nth-child(2) { letter-spacing: -0.85px; }
.row span:nth-child(3) { letter-spacing: -0.25px; }
.row span:nth-child(n+3) { text-align: right; }
.rows { padding-top: 1px; }
.row.head { height: 27px; line-height: 18px; border-bottom: 2px solid #2b6cb0; color: #20c41a; font-style: italic; font-size: 13.100px; }
.head span { padding-left: 7px; }
.head span:nth-child(n+1) { letter-spacing: -0.35px; }
.row.head span:nth-child(2) { padding-left: 13px; position: relative; }
.head span:nth-child(2)::before { content: ""; position: absolute; left: 1px; top: 18px; border: 4px solid transparent; border-top: 0; border-bottom-color: #20c41a; }
.row.head span:nth-child(3) { direction: rtl; }
.row.head span:nth-child(3) u { direction: ltr; unicode-bidi: isolate; }
.row.head span:nth-child(4) { text-align: left; padding-left: 9px; }
.vbar { width: 8px; border-radius: 4px; background: #98989a; }
.vbar i { display: block; height: 378px; border-radius: 4px; background: #444; border: 1px solid #777; }
.hbar { width: 316px; height: 9px; border-radius: 4px; background: #98989a; }
.hbar i { display: block; width: 217px; height: 9px; border-radius: 4px; background: #444; border: 1px solid #777; }

/* page tabs */
.pagetabs { height: 54px; background: #f3f2f1; display: flex; }
.views { width: 194px; display: flex; padding-left: 15px; border-right: 1px solid #a19f9d; }
.desk { width: 36px; display: flex; flex-direction: column; align-items: center; padding-top: 10px; }
.desk svg { margin-left: -2px; }
.desk i { width: 36px; height: 5px; border-radius: 3px; background: #117865; margin-top: 10px; }
.phone { margin: 7px 0 0 39px; }
.arrows { margin: 21px 0 0 32px; }
.tab { width: 176px; height: 53px; background: #fff; border-right: 1px solid #c8c6c4; font-size: 17.200px; line-height: 55px; text-align: center; white-space: nowrap; position: relative; }
.tab.on { width: 195px; font-weight: 600; border-bottom: 6px solid #117865; letter-spacing: -0.05px; }
.x { position: absolute; right: 6px; top: 1px; line-height: 24px; font-size: 15px; }
.plus { width: 59px; background: #117865; display: flex; align-items: center; justify-content: center; padding-bottom: 3px; }

/* side panes */
.pane { background: #f3f2f1; border-left: 1px solid #d8d6d4; display: flex; flex-direction: column; align-items: center; padding-top: 19px; font-size: 22px; font-weight: 600; }
.pane span { writing-mode: vertical-rl; line-height: 26px; margin: 22px 0 0 1px; white-space: nowrap; }
.p-filters { width: 49px; background: #fff; border-left-color: #a19f9d; }
.p-filters .funnel { margin: 24px 0 0 6px; }
.p-filters span { margin-top: 12px; }
.p-vis { width: 53px; }
.p-vis span { margin-left: 0; margin-right: 1px; letter-spacing: .2px; }
.p-dat { width: 50px; }

/* status bar */
.status { height: 35px; flex: none; background: #f3f2f1; border-top: 1px solid #e1dfdd; display: flex; align-items: center; padding: 0 25px 0 6px; font-size: 17.500px; color: #605e5c; }
.pct { margin: 0 29px 0 21px; letter-spacing: -0.3px; width: 34px; }

/* task bar */
.taskbar { height: 73px; flex: none; border-top: 1px solid #000; box-shadow: inset 0 2px #2c332d; background: linear-gradient(90deg, #1b210f 0, #1a2412 12%, #1c1f20 26%, #161a22 35%, #1a2313 48%, #14240f 62%, #122410 84%, #181e1e 95%, #162220 100%); display: flex; align-items: center; color: #e2e2e2; }
.weather { margin-left: 33px; width: 36px; padding-bottom: 8px; }
.win { margin-left: 197px; }
.search { margin-left: 19px; width: 330px; height: 48px; border-radius: 24px; border: 1px solid #464a48; background: linear-gradient(90deg, #34343a, #34353a 45%, #2f3b2c); display: flex; align-items: center; padding-left: 17px; font-size: 19.600px; color: #b7b9b7; }
.search span { margin: 0 0 0 14px; width: 64px; }
.spark { margin-left: 138px; }
.apps { display: flex; margin-left: 2px; }
.apps div { width: 66.100px; height: 60px; display: flex; align-items: center; justify-content: center; position: relative; }
.dim { filter: brightness(.85); }
.teams { margin-left: 12px; }
.help { margin-left: 10px; }
.apps .active { width: 60px; margin-left: 3px; background: #243022; border: 1px solid #303b2f; border-radius: 6px; }
.dot::after, .active::after { content: ""; position: absolute; bottom: 1px; left: 28px; width: 9px; height: 5px; border-radius: 3px; background: #909890; }
.active::after { left: 17px; width: 24px; background: #20e0ea; }
.badge { font: 18px "Open Sans", sans-serif; fill: #111; }
.tt { font: 700 15px "Open Sans", sans-serif; fill: #ddd; }
.qm { font: 700 30px "Open Sans", sans-serif; fill: #eee; }
.my { font: 13px "Open Sans", sans-serif; fill: #dfe9ee; }
.hp { font: italic 600 17px "Open Sans", sans-serif; }
.tray { display: flex; align-items: center; font-size: 17.700px; line-height: 24px; }
.t2 { margin-left: 28px; }
.lang { margin-left: 24px; width: 42px; text-align: center; font-size: 17px; }
.t3 { margin-left: 24px; }
.t4, .t5 { margin-left: 12px; }
.clock { margin-left: 20px; width: 98px; text-align: right; white-space: nowrap; }
.t6 { margin: 0 30px 0 12px; }
```
